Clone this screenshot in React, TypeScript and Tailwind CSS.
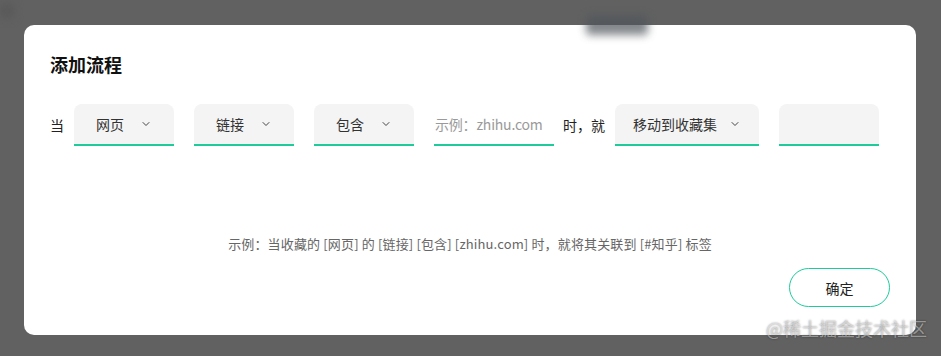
import { ChevronDown } from "lucide-react";

const font = { fontFamily: '"Noto Sans CJK SC", "Noto Sans", sans-serif' };

const Select = ({ label, width, gap = "gap-4" }: { label?: string; width: string; gap?: string }) => (
  <div
    className={`flex h-[42px] ${width} ${gap} items-center justify-center rounded-t-lg border-b-2 border-[#1fcb9a] bg-[#f4f4f4] text-sm text-[#333]`}
  >
    {label && <span>{label}</span>}
    {label && <ChevronDown className="h-3 w-3 text-[#444]" strokeWidth={2} />}
  </div>
);

export default function App() {
  return (
    <div className="relative h-[356px] w-[941px] overflow-hidden bg-[#616161]" style={font}>
      {/* blurred page content behind the overlay */}
      <div className="absolute left-[586px] top-[15px] h-[20px] w-[62px] rounded bg-[#50565c] opacity-70 blur-[4px]" />
      <div className="absolute left-0 top-[4px] h-[14px] w-[14px] rounded bg-[#595959] blur-[4px]" />

      <div className="pl-[24px] pt-[25px]">
        <div className="flex h-[310px] w-[892px] flex-col rounded-[10px] bg-white px-[26px] pt-[26px]">
          <h2 className="text-[18px] font-bold leading-[26px] text-[#111]">添加流程</h2>

          <div className="mt-[27px] flex items-center text-sm text-[#222]">
            <span className="mr-[10px]">当</span>
            <Select label="网页" width="w-[100px]" />
            <div className="w-5" />
            <Select label="链接" width="w-[100px]" />
            <div className="w-5" />
            <Select label="包含" width="w-[100px]" />
            <div className="w-5" />
            <div className="flex h-[42px] w-[120px] items-center border-b-2 border-[#1fcb9a] pl-px text-sm tracking-[-0.2px] text-[#9a9a9a]">
              示例：zhihu.com
            </div>
            <span className="ml-[9px] mr-[10px]">时，就</span>
            <Select label="移动到收藏集" width="w-[144px]" gap="gap-3" />
            <div className="w-5" />
            <Select width="w-[100px]" />
          </div>

          <p className="mt-[89px] text-center text-[13px] leading-[18px] tracking-[0.15px] text-[#666]">
            示例：当收藏的 [网页] 的 [链接] [包含] [zhihu.com] 时，就将其关联到 [#知乎] 标签
          </p>

          <div className="mt-[15px] flex justify-end">
            <button className="h-[39px] w-[101px] rounded-full border border-[#1fcb9a] bg-white text-sm text-[#222]">
              确定
            </button>
          </div>
        </div>
      </div>

      <div className="absolute left-[766px] top-[316px] text-[18px] leading-[24px] text-white/45 [text-shadow:0_0_2px_rgba(0,0,0,0.5)]">
        @稀土掘金技术社区
      </div>
    </div>
  );
}
